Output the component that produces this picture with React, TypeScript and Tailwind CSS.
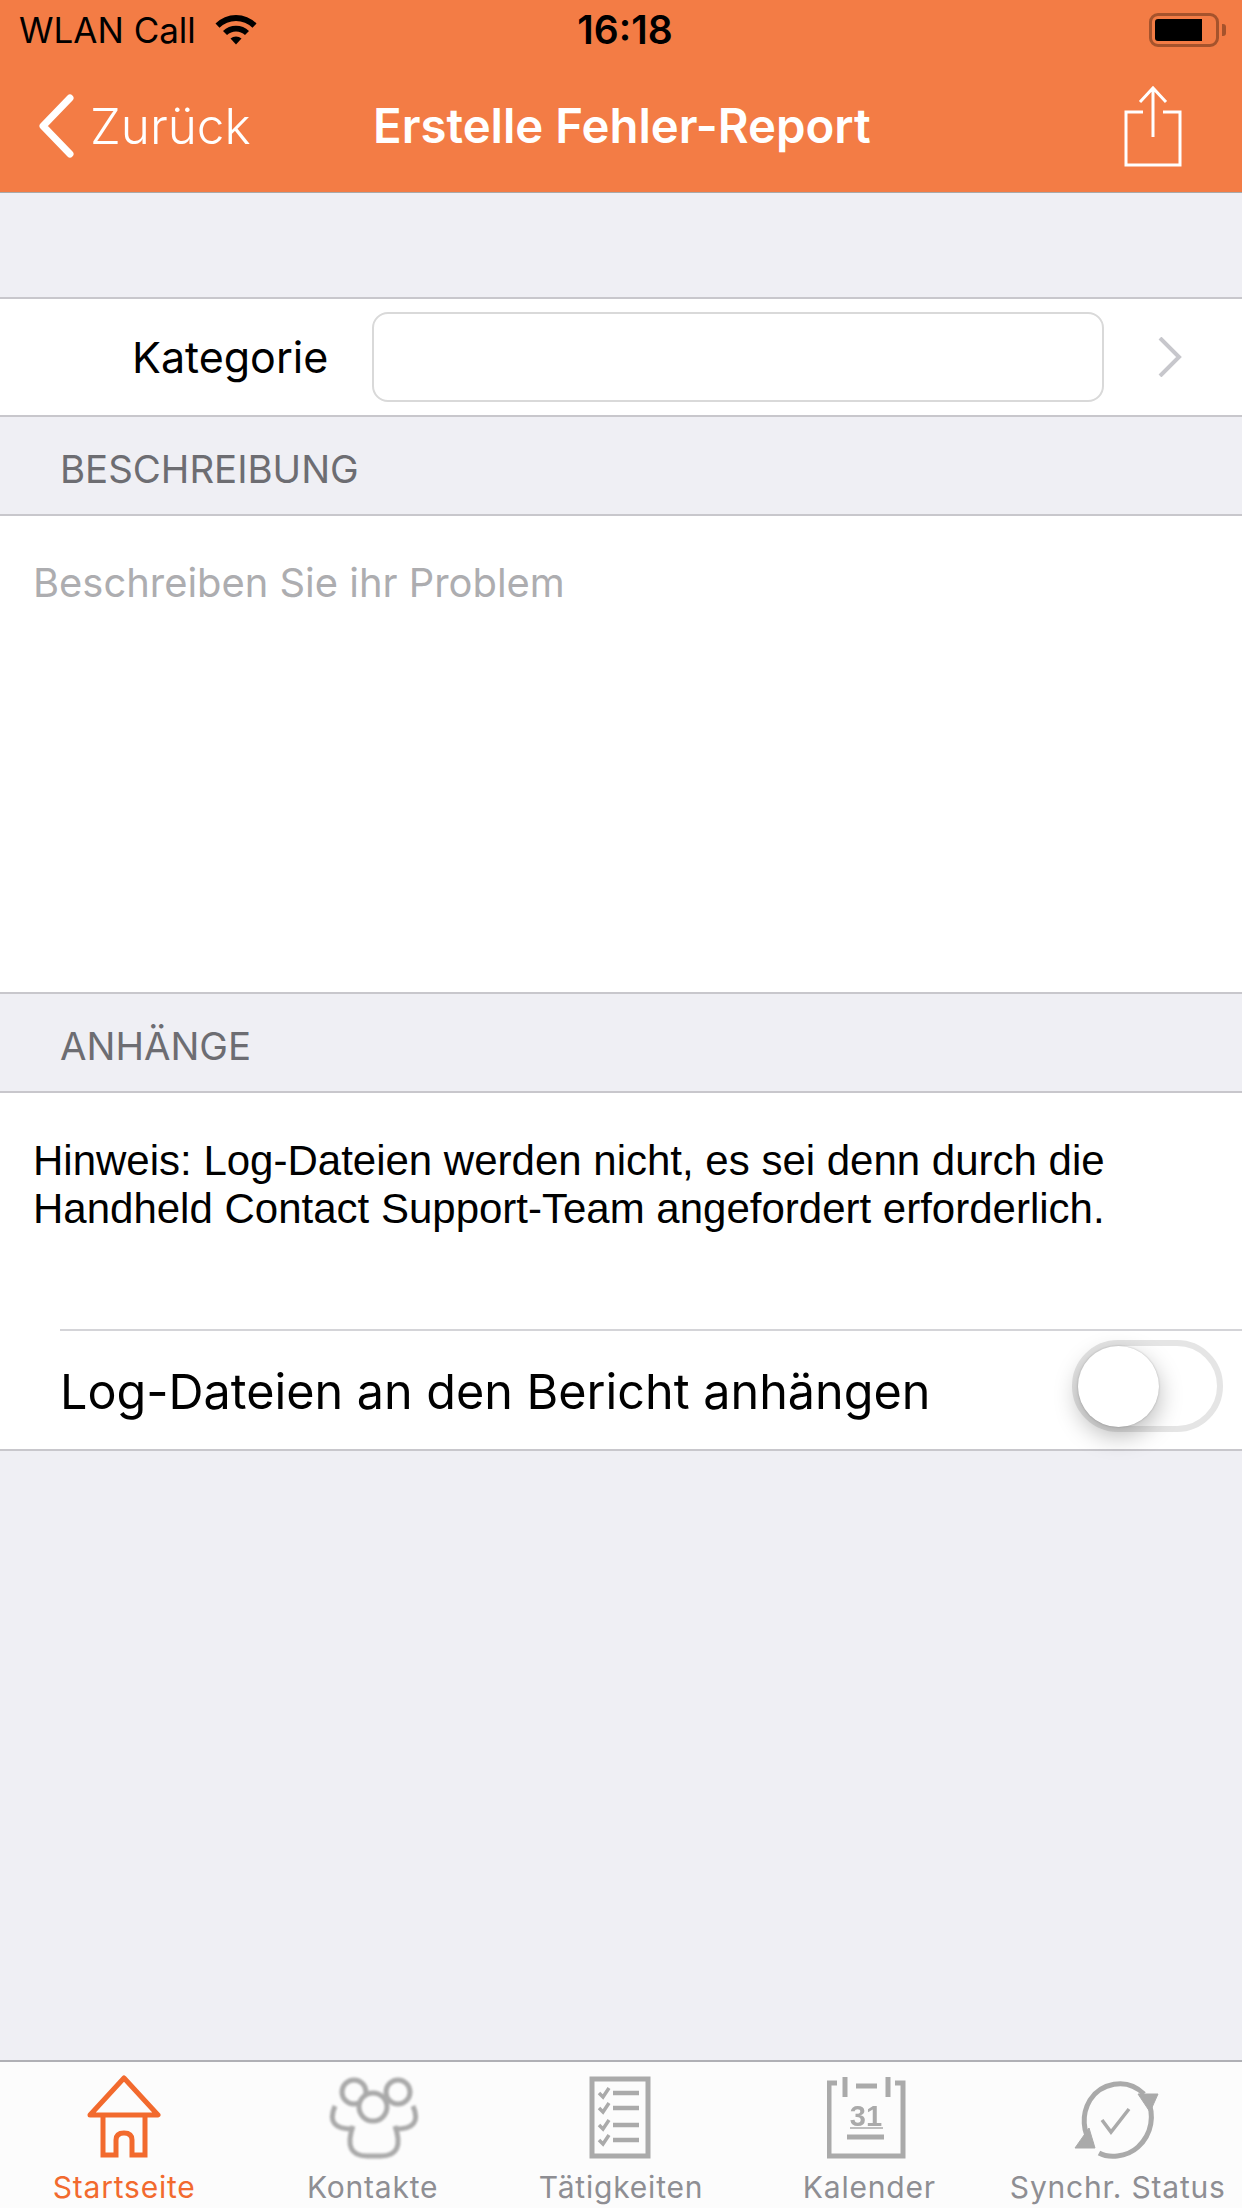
const TAB_LABEL = "mt-[8px] text-[30px] leading-[34px] tracking-[0.8px] whitespace-nowrap";

function HomeIcon() {
  return (
    <svg width="80" height="88" viewBox="84 2074 80 88" fill="none" stroke="#f26a2e" strokeWidth="5" className="blur-[0.7px]">
      <path d="M124 2078 L158 2115 H90 Z" strokeLinejoin="round" />
      <path d="M103 2115 V2155 H116 V2140 Q116 2133 124 2133 Q132 2133 132 2140 V2155 H145 V2115" />
    </svg>
  );
}

function ContactsIcon() {
  return (
    <svg width="92" height="88" viewBox="326 2074 92 88" fill="none" stroke="#aaaaaa" strokeWidth="5" className="blur-[0.8px]">
      <circle cx="353" cy="2092" r="12" />
      <circle cx="397" cy="2092" r="12" />
      <circle cx="372" cy="2107" r="14" fill="#fcfcfc" />
      <path d="M334 2106 C327 2122 334 2129 351 2129" />
      <path d="M412 2106 C419 2122 412 2129 395 2129" />
      <path d="M352 2126 C345 2146 350 2156 366 2156 H380 C396 2156 401 2146 394 2126" />
    </svg>
  );
}

function TasksIcon() {
  const rows = [2093, 2108, 2125, 2140];
  return (
    <svg width="64" height="88" viewBox="588 2074 64 88" fill="none" stroke="#aaaaaa" className="blur-[0.7px]">
      <rect x="591" y="2079" width="56" height="77" strokeWidth="5" />
      {rows.map((y) => (
        <g key={y} strokeWidth="3.5">
          <path d={`M598 ${y} L602 ${y + 4} L608 ${y - 5}`} />
          <path d={`M612 ${y} H638`} strokeWidth="4.5" />
        </g>
      ))}
    </svg>
  );
}

function CalendarIcon() {
  return (
    <svg width="84" height="88" viewBox="828 2074 84 88" fill="none" stroke="#aaaaaa" strokeWidth="5" className="blur-[0.7px]">
      <path d="M838 2083 H830 V2156 H904 V2083 H896" />
      <path d="M846 2077 V2097 M889 2077 V2097 M857 2086 H878" />
      <text x="867" y="2126" textAnchor="middle" fill="#aaaaaa" stroke="none" fontSize="29" fontWeight="700" className="font-['Liberation_Sans',sans-serif]">31</text>
      <path d="M851 2128 H884" strokeWidth="1.5" />
      <path d="M848 2137 H885" />
    </svg>
  );
}

function SyncIcon() {
  return (
    <svg width="88" height="88" viewBox="1076 2074 88 88" fill="none" stroke="#aaaaaa" strokeWidth="5" className="blur-[0.7px]">
      <path d="M1146 2094 C1128 2076 1102 2084 1092 2100 C1083 2115 1085 2132 1094 2145" />
      <path d="M1149 2098 C1157 2115 1154 2134 1140 2147 C1128 2158 1110 2158 1101 2153" />
      <path d="M1140 2094 H1160 L1152 2112 Z" fill="#aaaaaa" strokeWidth="1" />
      <path d="M1077 2148 H1097 L1091 2128 Z" fill="#aaaaaa" strokeWidth="1" />
      <path d="M1104 2120 L1113 2132 L1131 2109" strokeWidth="3.5" />
    </svg>
  );
}

const TABS = [
  { label: "Startseite", icon: <HomeIcon />, color: "text-[#f26a2e]" },
  { label: "Kontakte", icon: <ContactsIcon />, color: "text-[#8e8e93]" },
  { label: "Tätigkeiten", icon: <TasksIcon />, color: "text-[#8e8e93]" },
  { label: "Kalender", icon: <CalendarIcon />, color: "text-[#8e8e93]" },
  { label: "Synchr. Status", icon: <SyncIcon />, color: "text-[#8e8e93]" },
];

export default function App() {
  return (
    <div className="w-[1242px] h-[2208px] overflow-hidden flex flex-col bg-[#efeff4] font-['Inter',sans-serif]">
      <header className="h-[193px] shrink-0 bg-[#f37c45] border-b border-[#a9a9a9] flex flex-col">
        <div className="h-[60px] flex items-center justify-between pl-[19px] pr-[16px] text-black">
          <div className="w-[400px] flex items-center gap-[19px]">
            <span className="text-[35px] leading-[40px]">WLAN Call</span>
            <svg width="42" height="31" viewBox="0 0 42 31" fill="black" className="mt-[-2px]">
              <path d="M0.5 9.5 A29 29 0 0 1 41.5 9.5 L37.5 13.7 A23.5 23.5 0 0 0 4.5 13.7 Z" />
              <path d="M8 17 A18.5 18.5 0 0 1 34 17 L30 21 A13 13 0 0 0 12 21 Z" />
              <path d="M15.5 24.5 A8.5 8.5 0 0 1 26.5 24.5 L21 30.5 Z" />
            </svg>
          </div>
          <span className="ml-[5px] text-[39px] leading-[40px] font-semibold">16:18</span>
          <div className="w-[400px] flex justify-end items-center gap-[3px]">
            <div className="w-[70px] h-[34px] rounded-[9px] border-[3px] border-[#a5532c] p-[3px] flex">
              <div className="w-[47px] h-full bg-black rounded-l-[3px]" />
            </div>
            <div className="w-[4px] h-[12px] bg-[#a5532c] rounded-r-[3px]" />
          </div>
        </div>
        <div className="flex-1 grid grid-cols-[373px_1fr_auto] items-center">
          <div className="flex items-center pl-[38px] gap-[15px]">
            <svg width="37" height="64" viewBox="0 0 37 64" fill="none" stroke="white" strokeWidth="7" strokeLinecap="round" strokeLinejoin="round">
              <path d="M32 4 L5 32 L32 60" />
            </svg>
            <span className="text-white text-[49.5px] leading-[56px] font-[350]">Zurück</span>
          </div>
          <h1 className="text-white text-[47.3px] leading-[52px] font-semibold whitespace-nowrap">Erstelle Fehler-Report</h1>
          <svg width="58" height="82" viewBox="0 0 58 82" fill="none" stroke="white" strokeWidth="3" className="mr-[60px]">
            <path d="M19 27 H2 V80 H56 V27 H39" />
            <path d="M29 52 V3 M16 17 L29 3 L42 17" />
          </svg>
        </div>
      </header>

      <div className="h-[104px] shrink-0" />

      <section className="h-[120px] shrink-0 bg-white border-y-2 border-[#c8c7cc] flex items-center">
        <span className="w-[372px] shrink-0 pl-[132px] text-[43px] text-black">Kategorie</span>
        <div className="w-[732px] h-[90px] rounded-[16px] border-2 border-[#d9d9d9] bg-white" />
        <svg width="24" height="40" viewBox="0 0 24 40" fill="none" stroke="#c7c7cc" strokeWidth="4" className="ml-[54px]">
          <path d="M2 1 L21 20 L2 39" />
        </svg>
      </section>

      <div className="h-[97px] shrink-0 flex items-center pl-[60px] pt-[9px] text-[38.4px] text-[#6d6d72]">BESCHREIBUNG</div>

      <section className="h-[480px] shrink-0 bg-white border-y-2 border-[#c8c7cc] pl-[33px] pt-[43px] text-[39.9px] leading-[48px] text-[#adadb0]">
        Beschreiben Sie ihr Problem
      </section>

      <div className="h-[97px] shrink-0 flex items-center pl-[60px] pt-[9px] text-[38.4px] text-[#6d6d72]">ANHÄNGE</div>

      <section className="h-[360px] shrink-0 bg-white border-y-2 border-[#c8c7cc] flex flex-col">
        <p className="h-[236px] pl-[33px] pt-[44px] text-[42px] leading-[48px] text-black font-['Liberation_Sans',sans-serif]">
          Hinweis: Log-Dateien werden nicht, es sei denn durch die
          <br />
          Handheld Contact Support-Team angefordert erforderlich.
        </p>
        <div className="ml-[60px] flex-1 border-t-2 border-[#d4d4d8] flex items-center justify-between pr-[19px]">
          <span className="text-[48.5px] pt-[5px] text-black">Log-Dateien an den Bericht anhängen</span>
          <div className="w-[151px] h-[92px] mb-[8px] rounded-full border-[6px] border-[#e5e5e5] flex items-center">
            <div className="w-[81px] h-[81px] rounded-full bg-white shadow-[0_9px_24px_rgba(0,0,0,0.28),0_0_2px_rgba(0,0,0,0.25)]" />
          </div>
        </div>
      </section>

      <div className="flex-1" />

      <nav className="h-[148px] shrink-0 bg-[#fcfcfc] border-t-2 border-[#b0b0b5] grid grid-cols-5">
        {TABS.map((tab) => (
          <div key={tab.label} className="flex flex-col items-center pt-[12px]">
            <div className="h-[88px] flex items-center justify-center">{tab.icon}</div>
            <span className={`${TAB_LABEL} ${tab.color}`}>{tab.label}</span>
          </div>
        ))}
      </nav>
    </div>
  );
}
